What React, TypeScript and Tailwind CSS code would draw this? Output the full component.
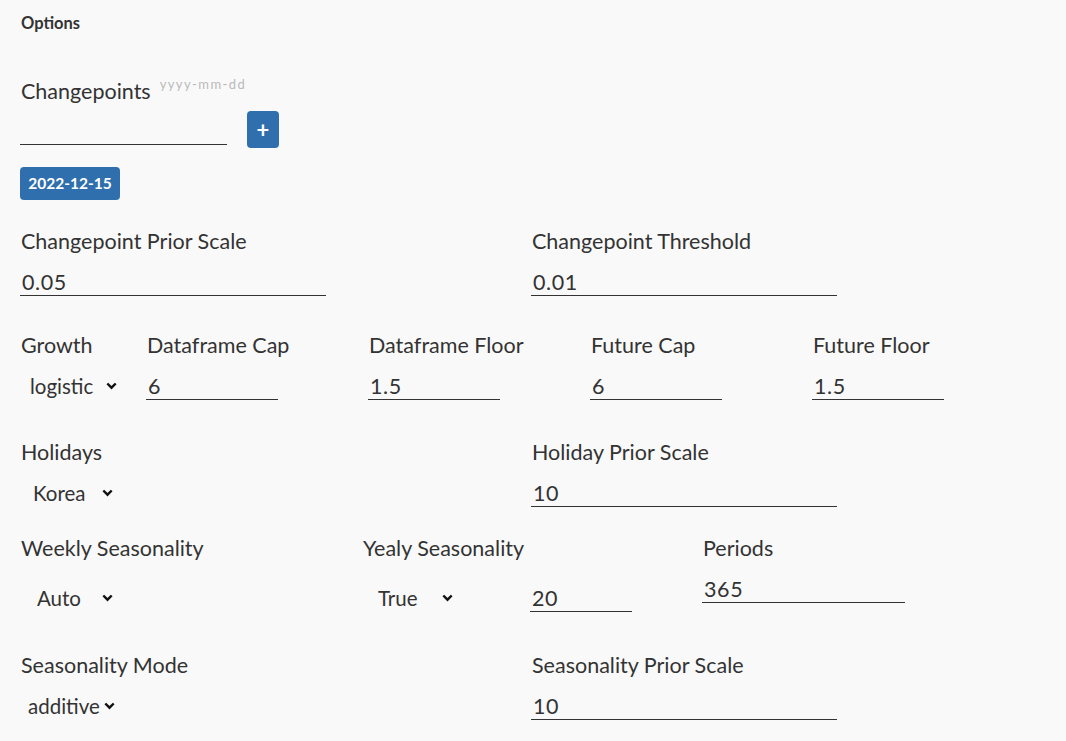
import React from "react";

const font = { fontFamily: "Lato, 'Noto Sans', sans-serif" };

const Chevron = () => (
  <svg width="11" height="8" viewBox="0 0 11 8" className="shrink-0">
    <path d="M1.3 1.5 L5.5 5.7 L9.7 1.5" fill="none" stroke="#111" strokeWidth="2.4" />
  </svg>
);

const Label = ({ children }: { children: React.ReactNode }) => (
  <div className="text-[21.5px] leading-6 text-[#333] pl-[1px]">{children}</div>
);

const Field = ({ value, w, h = "h-[43px]" }: { value: string; w: string; h?: string }) => (
  <div className={`${w} ${h} border-b border-[#333] flex items-end pl-[2px] pb-[1px] text-[21.5px] tracking-[0.6px] leading-6 text-[#333]`}>
    {value}
  </div>
);

const Select = ({ value, pl, w, h = "h-[43px]" }: { value: string; pl: string; w: string; h?: string }) => (
  <div className={`${h} flex items-end pb-[2px]`}>
    <div className={`flex items-center ${w} ${pl} h-6 text-[20.5px] text-[#333]`}>
      <span>{value}</span>
      <span className="ml-auto">
        <Chevron />
      </span>
    </div>
  </div>
);

export default function App() {
  return (
    <div className="min-h-[741px] bg-[#f9f9f9] px-5 pt-[13px]" style={font}>
      <div className="text-[16.5px] leading-5 font-bold text-[#333] pl-[1px]">Options</div>

      {/* Changepoints */}
      <div className="mt-[46px] flex items-start">
        <Label>Changepoints</Label>
        <span className="ml-[9px] -mt-[4px] text-[13px] tracking-[1.4px] text-[#b9b9b9]">yyyy-mm-dd</span>
      </div>
      <div className="mt-[8px] flex items-start">
        <div className="w-[207px] h-[34px] border-b border-[#333]" />
        <button className="ml-5 w-8 h-[37px] rounded-[4px] bg-[#2f6fae] text-white text-[22px] leading-none font-bold flex items-center justify-center">
          +
        </button>
      </div>
      <div className="mt-[19px]">
        <span className="inline-flex items-center justify-center w-[100px] h-[33px] rounded-[4px] bg-[#2f6fae] text-white text-[15.5px] font-bold">
          2022-12-15
        </span>
      </div>

      {/* Changepoint prior / threshold */}
      <div className="mt-[29px] grid grid-cols-[511px_1fr]">
        <div>
          <Label>Changepoint Prior Scale</Label>
          <Field value="0.05" w="w-[306px]" />
        </div>
        <div>
          <Label>Changepoint Threshold</Label>
          <Field value="0.01" w="w-[306px]" />
        </div>
      </div>

      {/* Growth row */}
      <div className="mt-[37px] flex">
        <div className="w-[126px]">
          <Label>Growth</Label>
          <Select value="logistic" pl="pl-[10px]" w="w-[97px]" />
        </div>
        <div className="w-[222px]">
          <Label>Dataframe Cap</Label>
          <Field value="6" w="w-[132px]" />
        </div>
        <div className="w-[222px]">
          <Label>Dataframe Floor</Label>
          <Field value="1.5" w="w-[132px]" />
        </div>
        <div className="w-[222px]">
          <Label>Future Cap</Label>
          <Field value="6" w="w-[132px]" />
        </div>
        <div className="w-[222px]">
          <Label>Future Floor</Label>
          <Field value="1.5" w="w-[132px]" />
        </div>
      </div>

      {/* Holidays */}
      <div className="mt-[40px] grid grid-cols-[511px_1fr]">
        <div>
          <Label>Holidays</Label>
          <Select value="Korea" pl="pl-[13px]" w="w-[93px]" />
        </div>
        <div>
          <Label>Holiday Prior Scale</Label>
          <Field value="10" w="w-[306px]" />
        </div>
      </div>

      {/* Seasonality */}
      <div className="mt-[29px] flex items-start">
        <div className="w-[342px]">
          <Label>Weekly Seasonality</Label>
          <Select value="Auto" pl="pl-[17px]" w="w-[93px]" h="h-[52px]" />
        </div>
        <div className="w-[168px]">
          <Label>Yealy Seasonality</Label>
          <Select value="True" pl="pl-[16px]" w="w-[91px]" h="h-[52px]" />
        </div>
        <div className="w-[172px] pt-[24px]">
          <Field value="20" w="w-[102px]" h="h-[52px]" />
        </div>
        <div>
          <Label>Periods</Label>
          <Field value="365" w="w-[203px]" />
        </div>
      </div>

      {/* Seasonality mode */}
      <div className="mt-[41px] grid grid-cols-[511px_1fr]">
        <div>
          <Label>Seasonality Mode</Label>
          <Select value="additive" pl="pl-[8px]" w="w-[95px]" />
        </div>
        <div>
          <Label>Seasonality Prior Scale</Label>
          <Field value="10" w="w-[306px]" />
        </div>
      </div>
    </div>
  );
}
